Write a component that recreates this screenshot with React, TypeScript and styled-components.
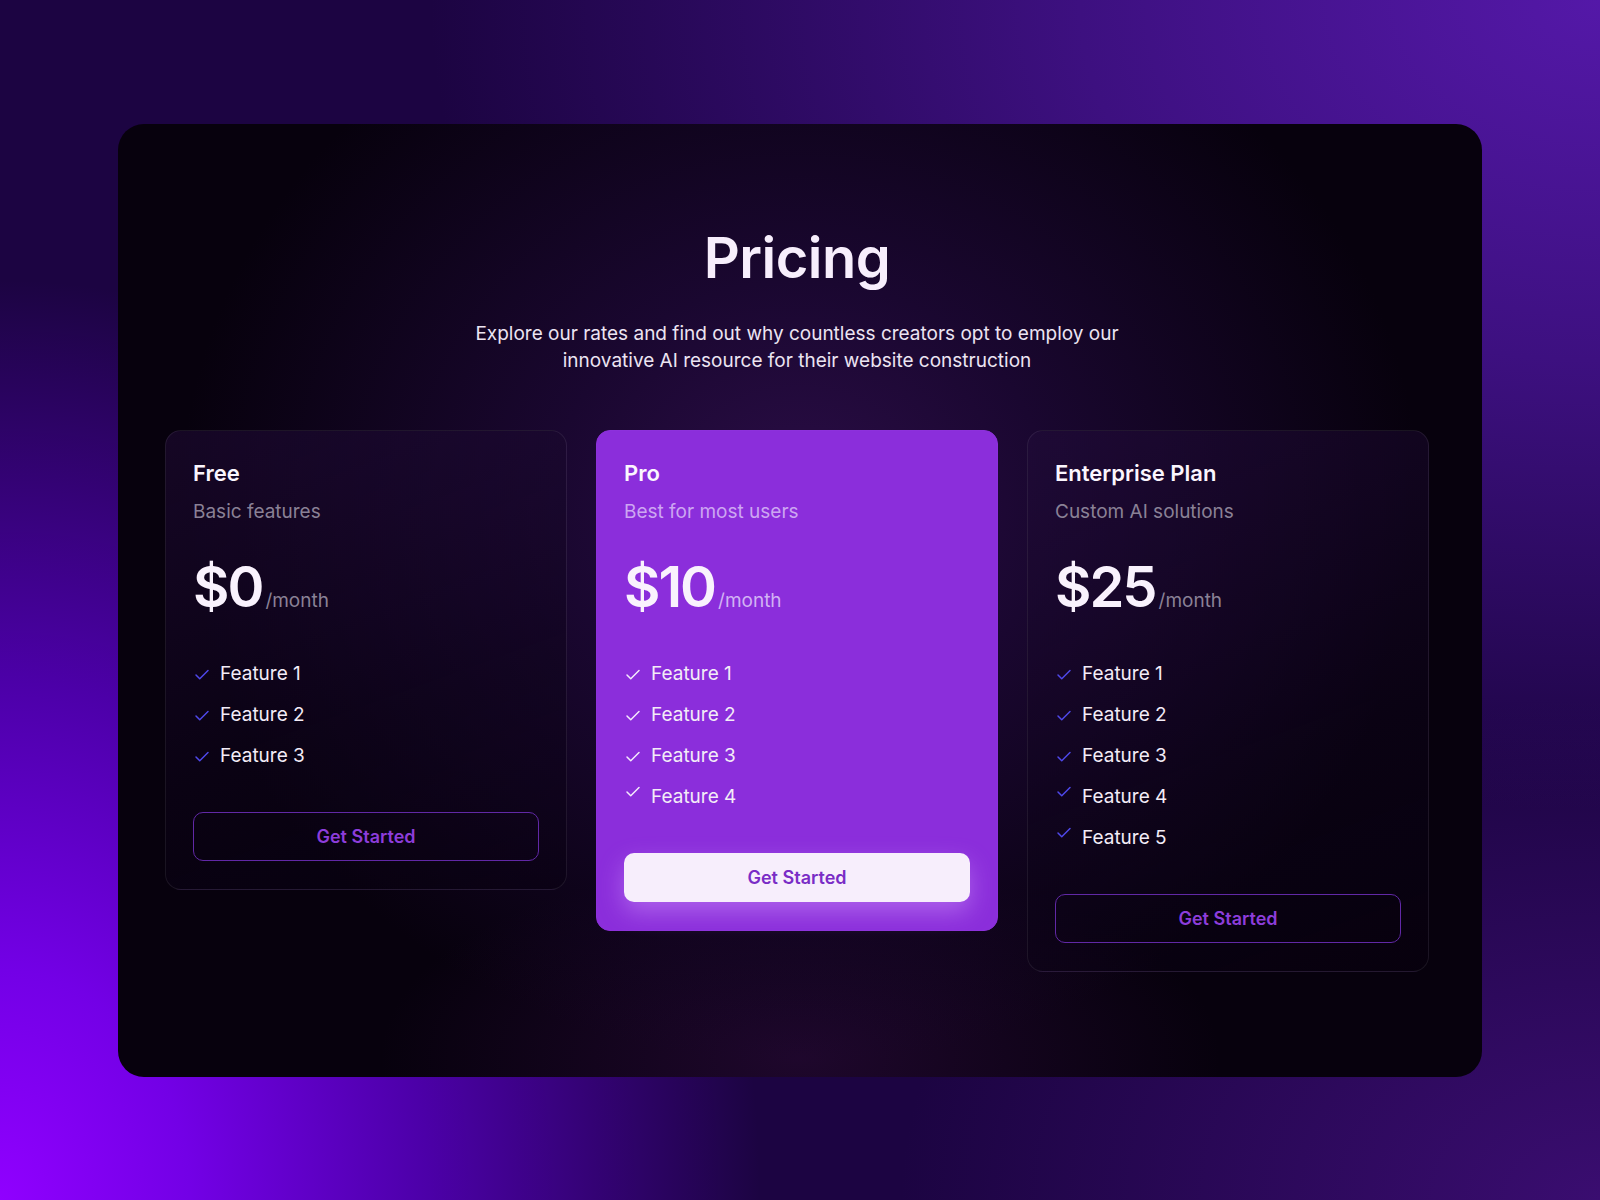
import React from "react";
import styled, { createGlobalStyle } from "styled-components";
import { Check } from "lucide-react";

const GlobalStyle = createGlobalStyle`
  html, body {
    margin: 0;
    padding: 0;
  }
  body {
    font-family: Inter, "Noto Sans", "Liberation Sans", sans-serif;
    -webkit-font-smoothing: antialiased;
  }
  * {
    box-sizing: border-box;
  }
`;

const Page = styled.div`
  width: 1600px;
  height: 1200px;
  display: flex;
  align-items: center;
  justify-content: center;
  background:
    radial-gradient(ellipse 950px 1150px at 0% 100%, #9000ff 0%, #7300e6 20%, #4c00a8 45%, rgba(40, 5, 90, 0) 80%),
    radial-gradient(ellipse 1300px 900px at 100% 0%, #5418a8 0%, #3d1080 40%, rgba(30, 5, 70, 0) 90%),
    radial-gradient(ellipse 700px 500px at 100% 100%, #3a0d70 0%, rgba(30, 5, 70, 0) 100%),
    #1c0442;
`;

const Panel = styled.section`
  width: 1364px;
  height: 953px;
  border-radius: 26px;
  padding: 102px 53px 0 47px;
  display: flex;
  flex-direction: column;
  align-items: center;
  background:
    radial-gradient(ellipse 620px 560px at 50% 40%, #2b0d47 0%, #1a0730 40%, rgba(10, 2, 18, 0) 100%),
    radial-gradient(ellipse 420px 200px at 50% 98%, rgba(50, 12, 70, 0.55) 0%, rgba(10, 2, 18, 0) 100%),
    #07010d;
`;

const Title = styled.h1`
  margin: 0;
  font-size: 56px;
  line-height: 64px;
  font-weight: 600;
  letter-spacing: -0.5px;
  color: #f7eefc;
`;

const Lead = styled.p`
  margin: 30px 0 0;
  width: 700px;
  text-align: center;
  font-size: 19px;
  line-height: 27px;
  color: #ece4f2;
`;

const Grid = styled.div`
  margin-top: 56px;
  width: 100%;
  display: grid;
  grid-template-columns: repeat(3, 1fr);
  gap: 29px;
  align-items: start;
`;

const Card = styled.div<{ $featured?: boolean }>`
  display: flex;
  flex-direction: column;
  padding: 28px 27px;
  border-radius: ${(p) => (p.$featured ? "14px" : "16px")};
  border: 1px solid ${(p) => (p.$featured ? "#8d31dc" : "rgba(255, 255, 255, 0.08)")};
  background: ${(p) =>
    p.$featured
      ? "#8b2edb"
      : "linear-gradient(160deg, rgba(34, 12, 58, 0.55) 0%, rgba(14, 4, 26, 0.5) 60%, rgba(8, 1, 16, 0.4) 100%)"};
`;

const PlanName = styled.h3`
  margin: 0;
  font-size: 22px;
  line-height: 28px;
  font-weight: 600;
  color: #fbf6fe;
`;

const PlanNote = styled.div<{ $featured?: boolean }>`
  margin-top: 12px;
  font-size: 19px;
  line-height: 26px;
  color: ${(p) => (p.$featured ? "#cda6f2" : "#8a8196")};
`;

const PriceRow = styled.div`
  margin-top: 32px;
  display: flex;
  align-items: baseline;
  gap: 3px;
`;

const Amount = styled.span`
  font-size: 56px;
  line-height: 60px;
  font-weight: 600;
  letter-spacing: -2px;
  color: #f9f2fd;
`;

const Period = styled.span<{ $featured?: boolean }>`
  font-size: 19px;
  color: ${(p) => (p.$featured ? "#d2b2f4" : "#8a8196")};
`;

const FeatureList = styled.ul`
  margin: 44px 0 0;
  padding: 0;
  list-style: none;
  display: flex;
  flex-direction: column;
  gap: 15px;
`;

const FeatureItem = styled.li`
  display: flex;
  align-items: center;
  gap: 9px;
  font-size: 19px;
  line-height: 26px;
  color: #f3ecf7;
`;

const Tick = styled.span<{ $featured?: boolean; $raised?: boolean }>`
  display: flex;
  width: 18px;
  color: ${(p) => (p.$featured ? "#f4eafc" : "#4f48ea")};
  transform: translateY(${(p) => (p.$raised ? "-5px" : "1px")});
`;

const Button = styled.button<{ $featured?: boolean }>`
  margin-top: 43px;
  height: 49px;
  width: 100%;
  border-radius: 10px;
  font-family: inherit;
  font-size: 18px;
  font-weight: 600;
  cursor: pointer;
  border: ${(p) => (p.$featured ? "none" : "1.5px solid #6128a6")};
  color: ${(p) => (p.$featured ? "#7a2cc6" : "#8d3ddb")};
  background: ${(p) => (p.$featured ? "#f7eefc" : "transparent")};
  box-shadow: ${(p) => (p.$featured ? "0 10px 24px rgba(215, 160, 255, 0.45)" : "none")};
`;

interface Plan {
  name: string;
  note: string;
  price: string;
  features: string[];
  featured?: boolean;
}

const plans: Plan[] = [
  { name: "Free", note: "Basic features", price: "$0", features: ["Feature 1", "Feature 2", "Feature 3"] },
  {
    name: "Pro",
    note: "Best for most users",
    price: "$10",
    features: ["Feature 1", "Feature 2", "Feature 3", "Feature 4"],
    featured: true,
  },
  {
    name: "Enterprise Plan",
    note: "Custom AI solutions",
    price: "$25",
    features: ["Feature 1", "Feature 2", "Feature 3", "Feature 4", "Feature 5"],
  },
];

const PlanCard: React.FC<{ plan: Plan }> = ({ plan }) => (
  <Card $featured={plan.featured}>
    <PlanName>{plan.name}</PlanName>
    <PlanNote $featured={plan.featured}>{plan.note}</PlanNote>
    <PriceRow>
      <Amount>{plan.price}</Amount>
      <Period $featured={plan.featured}>/month</Period>
    </PriceRow>
    <FeatureList>
      {plan.features.map((f, i) => (
        <FeatureItem key={f}>
          <Tick $featured={plan.featured} $raised={i >= 3}>
            <Check size={18} strokeWidth={2} />
          </Tick>
          {f}
        </FeatureItem>
      ))}
    </FeatureList>
    <Button $featured={plan.featured}>Get Started</Button>
  </Card>
);

export default function App() {
  return (
    <Page>
      <GlobalStyle />
      <Panel>
        <Title>Pricing</Title>
        <Lead>
          Explore our rates and find out why countless creators opt to employ our innovative AI resource for their
          website construction
        </Lead>
        <Grid>
          {plans.map((p) => (
            <PlanCard key={p.name} plan={p} />
          ))}
        </Grid>
      </Panel>
    </Page>
  );
}
